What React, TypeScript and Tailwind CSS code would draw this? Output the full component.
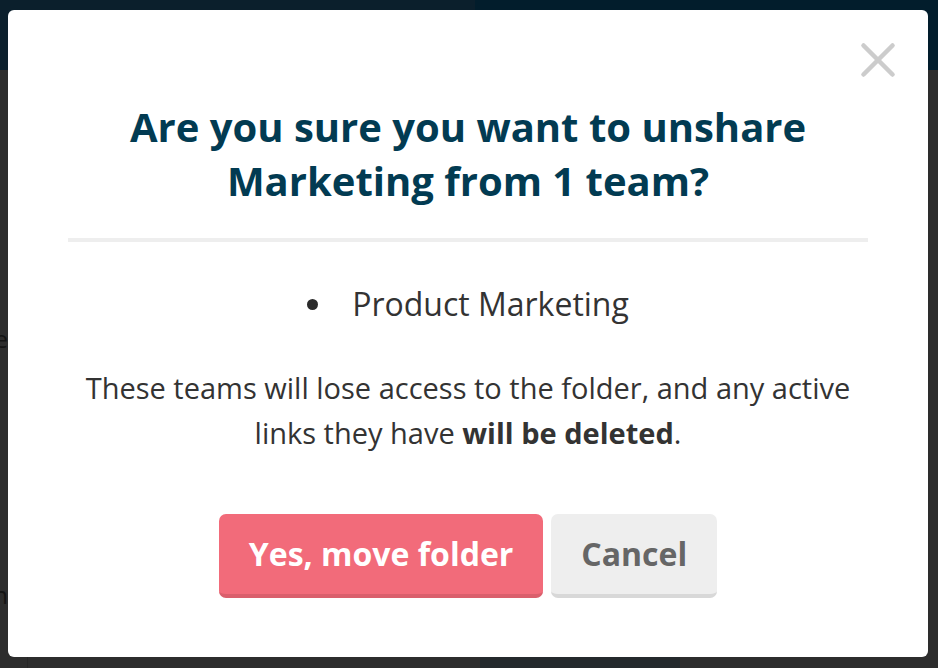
import { X } from 'lucide-react';

const font = { fontFamily: '"Open Sans", "Noto Sans", sans-serif' };

export default function App() {
  return (
    <div className="relative w-[938px] h-[668px] overflow-hidden bg-[#2d2d2d]" style={font}>
      {/* Dimmed page behind the modal */}
      <div className="h-[70px] flex">
        <div className="w-[475px] bg-[#0b1f2c]" />
        <div className="flex-1 bg-[#021d2c]" />
      </div>
      <div className="flex h-[598px]">
        <div className="w-[27px] flex flex-col">
          <div className="h-[254px]" />
          <div className="w-[8px] overflow-hidden flex justify-end text-[24px] leading-[30px] text-[#141414]">
            <span>Due</span>
          </div>
          <div className="h-[226px]" />
          <div className="w-[8px] overflow-hidden flex justify-end text-[24px] leading-[30px] text-[#141414]">
            <span>Nan</span>
          </div>
        </div>
        <div className="w-px bg-[#262626]" />
        <div className="flex-1 flex flex-col justify-end">
          <div className="flex h-[12px]">
            <div className="w-[452px]" />
            <div className="w-[200px] bg-[#24292c]" />
          </div>
        </div>
      </div>

      {/* Modal */}
      <div className="absolute left-[8px] top-[10px] w-[920px] h-[647px] bg-white rounded-[6px] flex flex-col items-center pt-[90px]">
        <button className="absolute right-[21px] top-[21px] text-[#cccccc]">
          <X size={58} strokeWidth={1.9} />
        </button>

        <h2 className="text-[40px] leading-[54px] font-bold text-[#023b52] text-center">
          Are you sure you want to unshare
          <br />
          Marketing from 1 team?
        </h2>

        <div className="mt-[30px] w-[800px] h-[4px] bg-[#eeeeee]" />

        <ul className="mt-[41px] flex flex-col items-center">
          <li className="flex items-center gap-[34px] text-[32px] leading-[42px] text-[#333333]">
            <span className="w-[11px] h-[11px] rounded-full bg-[#2a2a2a]" />
            <span>Product Marketing</span>
          </li>
        </ul>

        <p className="mt-[40px] text-[29px] leading-[45px] text-[#333333] text-center">
          These teams will lose access to the folder, and any active
          <br />
          links they have <strong className="font-bold">will be deleted</strong>.
        </p>

        <div className="mt-[59px] flex gap-[8px]">
          <button className="h-[84px] px-[30px] rounded-[7px] bg-[#f26b7a] border-b-[4px] border-[#da5f6c] text-white text-[32px] font-bold">
            Yes, move folder
          </button>
          <button className="h-[84px] px-[30px] rounded-[7px] bg-[#eeeeee] border-b-[4px] border-[#d8d8d8] text-[#666666] text-[32px] font-bold">
            Cancel
          </button>
        </div>
      </div>
    </div>
  );
}
